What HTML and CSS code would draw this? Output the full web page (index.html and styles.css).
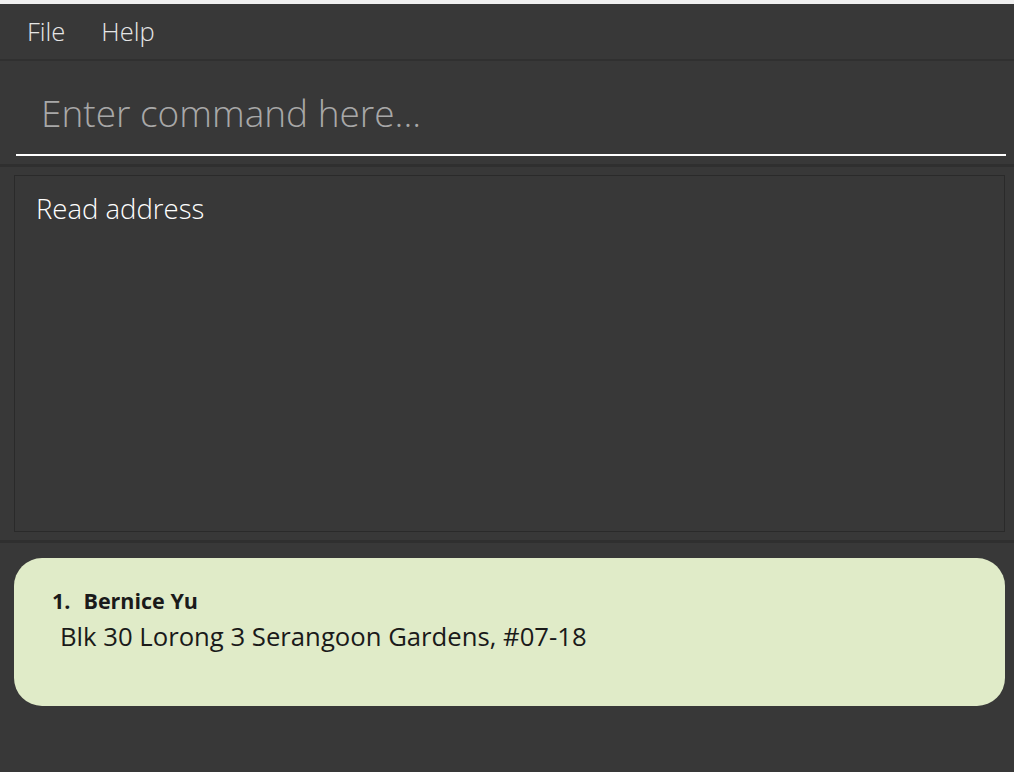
FILE: index.html
```html
<!DOCTYPE html>
<html>
<head>
<meta charset="utf-8">
<link rel="stylesheet" href="styles.css">
</head>
<body>
<div class="app">
  <div class="topstrip"></div>
  <nav class="menubar">
    <span class="menu-item">File</span>
    <span class="menu-item">Help</span>
  </nav>
  <section class="command-pane">
    <div class="command-field">Enter command here...</div>
  </section>
  <section class="result-pane">
    <div class="result-box">Read address</div>
  </section>
  <section class="list-pane">
    <div class="card">
      <div class="card-title"><span class="idx">1.</span><span class="name">Bernice Yu</span></div>
      <div class="card-address">Blk 30 Lorong 3 Serangoon Gardens, #07-18</div>
    </div>
  </section>
</div>
</body>
</html>
```
FILE: styles.css
```css
html, body {
  margin: 0;
  padding: 0;
  background: #383838;
  width: 1014px;
  height: 772px;
  overflow: hidden;
}
.app {
  width: 1014px;
  height: 772px;
  display: flex;
  flex-direction: column;
  font-family: "Open Sans", "Noto Sans", sans-serif;
}
.topstrip {
  height: 4px;
  background: #f0f0f0;
}
.menubar {
  height: 57px;
  flex: none;
  box-sizing: border-box;
  border-bottom: 2px solid #303030;
  display: flex;
  align-items: center;
  padding-left: 27px;
  padding-bottom: 1px;
  gap: 36px;
}
.menu-item {
  color: #e6e6e6;
  font-weight: 300;
  font-size: 25.5px;
}
.command-pane {
  height: 106px;
  flex: none;
  box-sizing: border-box;
  padding: 0 8px 8px 16px;
  display: flex;
  align-items: flex-end;
  border-bottom: 3px solid #2f2f2f;
}
.command-field {
  flex: 1;
  border-bottom: 2px solid #ffffff;
  color: #a8a8a8;
  font-size: 37px;
  font-weight: 300;
  padding: 0 0 16px 25px;
  line-height: 50px;
}
.result-pane {
  height: 376px;
  flex: none;
  box-sizing: border-box;
  padding: 8px 9px 8px 14px;
  border-bottom: 3px solid #2f2f2f;
  display: flex;
}
.result-box {
  flex: 1;
  border: 1px solid #2a2a2a;
  color: #ffffff;
  font-size: 27.5px;
  font-weight: 300;
  padding: 14px 21px;
}
.list-pane {
  flex: 1;
  padding: 15px 9px 0 14px;
}
.card {
  background: #e0ebc8;
  border-radius: 28px;
  height: 148px;
  box-sizing: border-box;
  padding: 28px 0 0 38px;
  color: #1a1a1a;
}
.card-title {
  font-size: 21.5px;
  font-weight: 700;
  display: flex;
  gap: 13px;
}
.card-address {
  font-size: 25.7px;
  padding-left: 8px;
  margin-top: 4px;
}
```
